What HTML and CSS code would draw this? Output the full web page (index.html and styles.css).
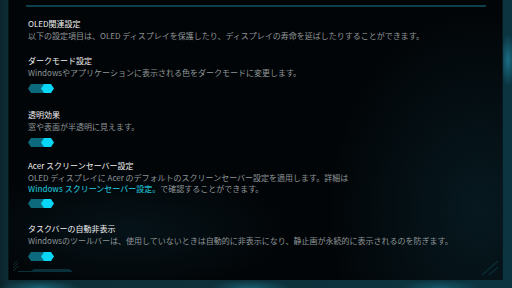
FILE: index.html
```html
<!DOCTYPE html>
<html lang="ja">
<head>
<meta charset="utf-8">
<link rel="stylesheet" href="styles.css">
</head>
<body>
<div class="frame">
  <main class="panel">
    <div class="topline"></div>
    <section class="section section--first">
      <h2 class="title">OLED関連設定</h2>
      <p class="desc">以下の設定項目は、OLED ディスプレイを保護したり、ディスプレイの寿命を延ばしたりすることができます。</p>
    </section>
    <section class="section">
      <h2 class="title">ダークモード設定</h2>
      <p class="desc">Windowsやアプリケーションに表示される色をダークモードに変更します。</p>
      <div class="toggle"><svg width="27" height="9" viewBox="0 0 27 9"><polygon class="track" points="3,0 19,0 22,4.5 19,9 3,9 0,4.5"/><polygon class="knob" points="16,0 23,0 26,4.5 23,9 16,9 13,4.5"/></svg></div>
    </section>
    <section class="section section--loose">
      <h2 class="title">透明効果</h2>
      <p class="desc">窓や表面が半透明に見えます。</p>
      <div class="toggle"><svg width="27" height="9" viewBox="0 0 27 9"><polygon class="track" points="3,0 19,0 22,4.5 19,9 3,9 0,4.5"/><polygon class="knob" points="16,0 23,0 26,4.5 23,9 16,9 13,4.5"/></svg></div>
    </section>
    <section class="section section--tight">
      <h2 class="title">Acer スクリーンセーバー設定</h2>
      <p class="desc">OLED ディスプレイに Acer のデフォルトのスクリーンセーバー設定を適用します。詳細は<br><span class="link">Windows スクリーンセーバー設定。</span>で確認することができます。</p>
      <div class="toggle toggle--close"><svg width="27" height="9" viewBox="0 0 27 9"><polygon class="track" points="3,0 19,0 22,4.5 19,9 3,9 0,4.5"/><polygon class="knob" points="16,0 23,0 26,4.5 23,9 16,9 13,4.5"/></svg></div>
    </section>
    <section class="section section--last">
      <h2 class="title">タスクバーの自動非表示</h2>
      <p class="desc">Windowsのツールバーは、使用していないときは自動的に非表示になり、静止画が永続的に表示されるのを防ぎます。</p>
      <div class="toggle"><svg width="27" height="9" viewBox="0 0 27 9"><polygon class="track" points="3,0 19,0 22,4.5 19,9 3,9 0,4.5"/><polygon class="knob" points="16,0 23,0 26,4.5 23,9 16,9 13,4.5"/></svg></div>
    </section>
    <svg class="deco deco--left" width="70" height="20" viewBox="0 0 70 20">
      <line x1="2" y1="9" x2="6" y2="5" stroke="#0a2d35" stroke-width="1"/>
      <line x1="2" y1="12" x2="7" y2="7" stroke="#0a2d35" stroke-width="1"/>
      <line x1="2" y1="15" x2="7" y2="10" stroke="#0a2d35" stroke-width="1"/>
      <polygon points="7,15 20,15 23,13 58,13 61,15 61,16 7,16" fill="#0a303a"/>
    </svg>
    <svg class="deco deco--right" width="24" height="24" viewBox="0 0 24 24">
      <line x1="6" y1="22" x2="22" y2="8" stroke="#092c35" stroke-width="1.5"/>
      <line x1="13" y1="22" x2="22" y2="14" stroke="#092c35" stroke-width="1.5"/>
    </svg>
  </main>
</div>
</body>
</html>
```

FILE: styles.css
```css
html, body {
  margin: 0;
  padding: 0;
}
body {
  width: 512px;
  height: 288px;
  overflow: hidden;
  font-family: "Noto Sans CJK JP", "Noto Sans", sans-serif;
  background:
    radial-gradient(ellipse 8px 26px at 508px 60px, rgba(30, 120, 145, 0.85), rgba(30, 120, 145, 0) 100%),
    radial-gradient(ellipse 40px 8px at 40px 288px, rgba(30, 120, 140, 0.7), rgba(30, 120, 140, 0) 100%),
    radial-gradient(ellipse 40px 8px at 250px 288px, rgba(30, 120, 140, 0.6), rgba(30, 120, 140, 0) 100%),
    radial-gradient(ellipse 40px 8px at 440px 288px, rgba(30, 120, 140, 0.5), rgba(30, 120, 140, 0) 100%),
    linear-gradient(90deg, #0c252c 0px, #0e2d35 8px, #0b3440 500px, #0b3440 512px);
}
.frame {
  box-sizing: border-box;
  width: 512px;
  height: 288px;
  padding: 0 9px 8px 8px;
  display: flex;
}
.panel {
  position: relative;
  flex: 1;
  box-sizing: border-box;
  padding: 5px 0 0 19px;
  border-right: 1px solid #061820;
  border-left: 1px solid #061318;
  background:
    radial-gradient(ellipse 150px 200px at 470px 210px, rgba(12, 50, 60, 0.45), rgba(12, 50, 60, 0) 100%),
    radial-gradient(ellipse 160px 60px at 120px 230px, rgba(12, 45, 55, 0.35), rgba(12, 45, 55, 0) 100%),
    #020508;
  color: #e6e6e6;
}
.topline {
  margin-left: -2px;
  width: 460px;
  height: 2px;
  background: #0e3f4c;
}
.section {
  margin-top: 14px;
}
.section--first {
  margin-top: 11px;
}
.section--loose {
  margin-top: 16px;
}
.section--tight {
  margin-top: 13px;
}
.section--last {
  margin-top: 15px;
}
.title {
  margin: 0;
  font-size: 8px;
  font-weight: 400;
  line-height: 12px;
  color: #f0f0f0;
}
.desc {
  margin: 0;
  font-size: 8px;
  font-weight: 400;
  line-height: 11px;
  color: #8f9597;
}
.link {
  color: #1cb5c6;
  font-weight: 500;
}
.toggle {
  margin-top: 6px;
  height: 9px;
  display: flex;
}
.toggle--close {
  margin-top: 5px;
}
.track {
  fill: #0d6a7c;
}
.knob {
  fill: #08d6f6;
}
.deco {
  position: absolute;
}
.deco--left {
  left: 2px;
  bottom: 4px;
}
.deco--right {
  right: 2px;
  bottom: 3px;
}
```
